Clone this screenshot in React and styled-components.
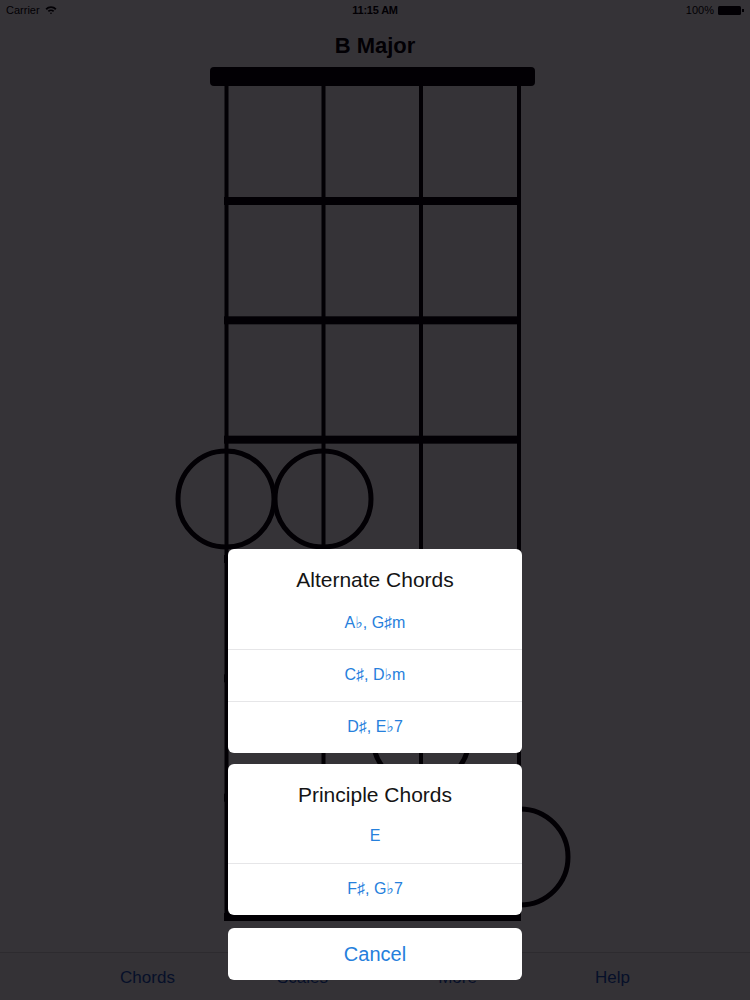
import React from "react";
import styled, { createGlobalStyle } from "styled-components";

const Global = createGlobalStyle`
  html, body { margin: 0; padding: 0; background: #ffffff; overflow: hidden; }
  body { font-family: "Liberation Sans", Arial, "DejaVu Sans", sans-serif; }
  * { box-sizing: border-box; }
`;

const Page = styled.div`
  position: relative;
  width: 750px;
  height: 1000px;
  display: flex;
  flex-direction: column;
  background: #ffffff;
`;

const StatusBar = styled.div`
  height: 20px;
  display: grid;
  grid-template-columns: 1fr auto 1fr;
  align-items: center;
  padding: 0 6px;
  font-size: 11px;
  color: #000;
`;

const StatusLeft = styled.div`
  display: flex;
  align-items: center;
  gap: 5px;
`;

const StatusTime = styled.div`
  font-weight: 700;
  letter-spacing: -0.2px;
`;

const StatusRight = styled.div`
  display: flex;
  align-items: center;
  justify-content: flex-end;
  gap: 4px;
`;

const Battery = styled.div`
  position: relative;
  width: 23px;
  height: 9px;
  border-radius: 1.5px;
  background: #000;
  margin-right: 3px;
  &::after {
    content: "";
    position: absolute;
    right: -2.5px;
    top: 3px;
    width: 2px;
    height: 3px;
    background: #000;
  }
`;

const Title = styled.h1`
  margin: 0;
  padding-top: 14px;
  height: 38px;
  line-height: 24px;
  text-align: center;
  font-size: 22px;
  font-weight: 700;
  color: #000;
`;

const Chart = styled.svg`
  display: block;
  width: 750px;
  height: 870px;
`;

const TabBar = styled.nav`
  margin-top: auto;
  height: 48px;
  border-top: 1px solid #d4d4d4;
  background: #f8f8f8;
  display: grid;
  grid-template-columns: repeat(4, 155px);
  justify-content: center;
  padding-top: 15px;
  padding-left: 10px;
`;

const TabItem = styled.div`
  text-align: center;
  font-size: 17px;
  line-height: 20px;
  color: #1652b8;
`;

const Dim = styled.div`
  position: absolute;
  inset: 0;
  background: rgba(2, 0, 5, 0.8);
`;

const Sheet = styled.div`
  position: absolute;
  left: 228px;
  bottom: 20px;
  width: 294px;
  display: flex;
  flex-direction: column;
`;

const Group = styled.div`
  background: #ffffff;
  border-radius: 6px;
  overflow: hidden;
  margin-top: ${(p) => p.$gap || 0}px;
`;

const GroupTitle = styled.div`
  height: ${(p) => p.$h}px;
  padding-top: 20px;
  text-align: center;
  font-size: 21px;
  line-height: 22px;
  color: #141414;
`;

const Item = styled.div`
  height: 52px;
  display: flex;
  align-items: center;
  justify-content: center;
  padding-bottom: 2px;
  font-size: 16px;
  color: #2680dc;
  border-top: ${(p) => (p.$first ? "none" : "1px solid #e6e6e8")};
`;

const CancelButton = styled.div`
  height: 52px;
  display: flex;
  align-items: center;
  justify-content: center;
  font-size: 20px;
  color: #2680dc;
`;

function Wifi() {
  return (
    <svg width="12" height="10" viewBox="0 0 12 10">
      <path d="M0.5 3.6 A7.6 7.6 0 0 1 11.5 3.6 L10.2 4.9 A5.8 5.8 0 0 0 1.8 4.9 Z" fill="#000" />
      <path d="M2.7 5.8 A4.6 4.6 0 0 1 9.3 5.8 L8 7.1 A2.8 2.8 0 0 0 4 7.1 Z" fill="#000" />
      <path d="M4.9 8 A1.6 1.6 0 0 1 7.1 8 L6 9.3 Z" fill="#000" />
    </svg>
  );
}

const strings = [226.5, 323.5, 421, 519];
const frets = [0, 1, 2, 3, 4, 5, 6].map((i) => 201 + i * 119.33);
const dots = [
  { x: 226, y: 499 },
  { x: 323, y: 499 },
  { x: 421, y: 738 },
  { x: 520, y: 857 },
];

function ChordChart() {
  return (
    <Chart viewBox="0 58 750 870">
      <rect x="210" y="67" width="325" height="19" rx="4" fill="#000" />
      {strings.map((x) => (
        <rect key={x} x={x - 2} y="84" width="4" height="837" fill="#000" />
      ))}
      {frets.map((y) => (
        <rect key={y} x="224" y={y - 4} width="297" height="8" fill="#000" />
      ))}
      {dots.map((d) => (
        <circle key={d.x + "-" + d.y} cx={d.x} cy={d.y} r="48" fill="none" stroke="#000" strokeWidth="5" />
      ))}
    </Chart>
  );
}

const alternates = ["A\u266D, G\u266Fm", "C\u266F, D\u266Dm", "D\u266F, E\u266D7"];
const principles = ["E", "F\u266F, G\u266D7"];

export default function App() {
  return (
    <>
      <Global />
      <Page>
        <StatusBar>
          <StatusLeft>
            <span>Carrier</span>
            <Wifi />
          </StatusLeft>
          <StatusTime>11:15 AM</StatusTime>
          <StatusRight>
            <span>100%</span>
            <Battery />
          </StatusRight>
        </StatusBar>
        <Title>B Major</Title>
        <ChordChart />
        <TabBar>
          <TabItem>Chords</TabItem>
          <TabItem>Scales</TabItem>
          <TabItem>More</TabItem>
          <TabItem>Help</TabItem>
        </TabBar>
        <Dim />
        <Sheet>
          <Group>
            <GroupTitle $h={48}>Alternate Chords</GroupTitle>
            {alternates.map((c, i) => (
              <Item key={c} $first={i === 0}>{c}</Item>
            ))}
          </Group>
          <Group $gap={11}>
            <GroupTitle $h={47}>Principle Chords</GroupTitle>
            {principles.map((c, i) => (
              <Item key={c} $first={i === 0}>{c}</Item>
            ))}
          </Group>
          <Group $gap={13}>
            <CancelButton>Cancel</CancelButton>
          </Group>
        </Sheet>
      </Page>
    </>
  );
}
